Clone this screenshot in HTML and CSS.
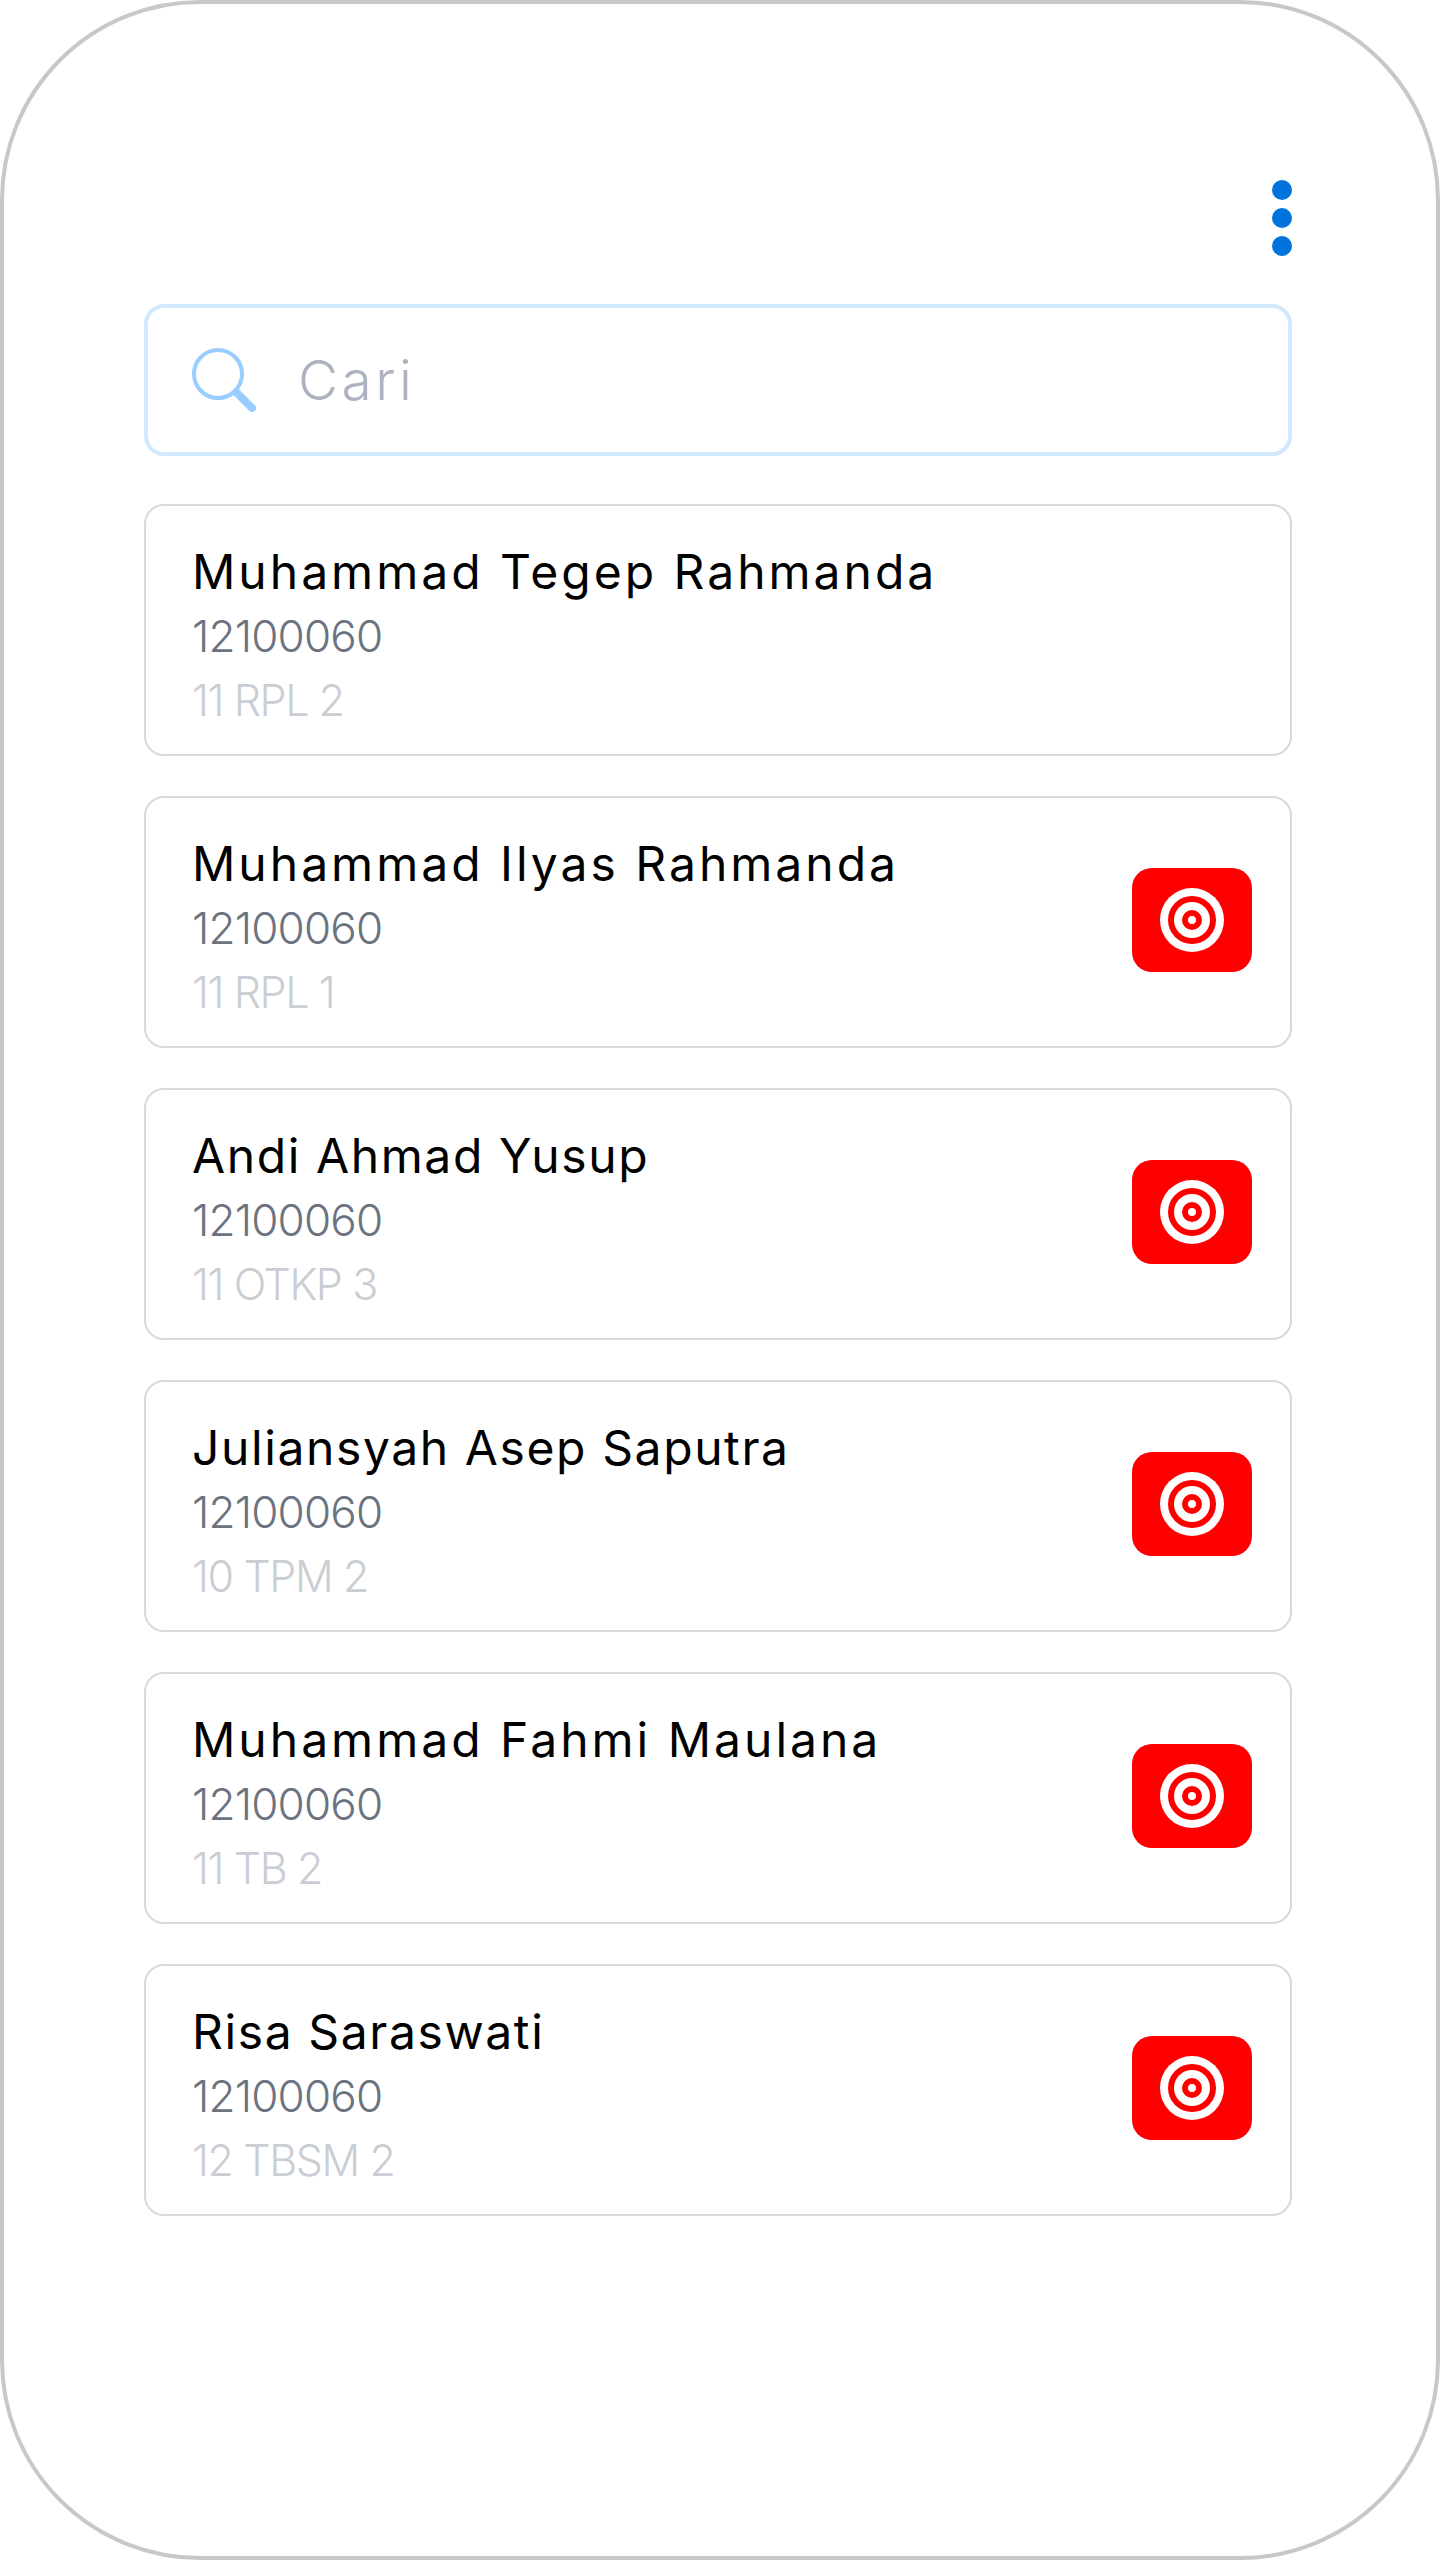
FILE: index.html
```html
<!DOCTYPE html>
<html lang="id">

<head>
    <meta charset="UTF-8">
    <meta name="viewport" content="width=device-width, initial-scale=1.0">
    <title>Cari Siswa</title>
    <link rel="stylesheet" href="styles.css">
</head>

<body>
    <div class="frame">
        <div class="top-bar">
            <div class="menu-dots">
                <span></span>
                <span></span>
                <span></span>
            </div>
        </div>

        <div class="search">
            <svg class="search-icon" width="64" height="64" viewBox="0 0 64 64">
                <circle cx="26" cy="26" r="24" fill="none" stroke="#99ccff" stroke-width="4"/>
                <path d="M44.5 44.5 L60 60" fill="none" stroke="#99ccff" stroke-width="8" stroke-linecap="round"/>
            </svg>
            <span class="search-text">Cari</span>
        </div>

        <div class="list">
            <div class="card">
                <div class="info">
                    <p class="name wide">Muhammad Tegep Rahmanda</p>
                    <p class="nis">12100060</p>
                    <p class="kelas">11 RPL 2</p>
                </div>
            </div>

            <div class="card">
                <div class="info">
                    <p class="name wide">Muhammad Ilyas Rahmanda</p>
                    <p class="nis">12100060</p>
                    <p class="kelas">11 RPL 1</p>
                </div>
                <div class="badge">
                    <svg width="64" height="64" viewBox="0 0 64 64">
                        <circle cx="32" cy="32" r="32" fill="#fff"/>
                        <circle cx="32" cy="32" r="24" fill="#f00"/>
                        <circle cx="32" cy="32" r="18" fill="#fff"/>
                        <circle cx="32" cy="32" r="10" fill="#f00"/>
                        <circle cx="32" cy="32" r="4" fill="#fff"/>
                    </svg>
                </div>
            </div>

            <div class="card">
                <div class="info">
                    <p class="name">Andi Ahmad Yusup</p>
                    <p class="nis">12100060</p>
                    <p class="kelas">11 OTKP 3</p>
                </div>
                <div class="badge">
                    <svg width="64" height="64" viewBox="0 0 64 64">
                        <circle cx="32" cy="32" r="32" fill="#fff"/>
                        <circle cx="32" cy="32" r="24" fill="#f00"/>
                        <circle cx="32" cy="32" r="18" fill="#fff"/>
                        <circle cx="32" cy="32" r="10" fill="#f00"/>
                        <circle cx="32" cy="32" r="4" fill="#fff"/>
                    </svg>
                </div>
            </div>

            <div class="card">
                <div class="info">
                    <p class="name">Juliansyah Asep Saputra</p>
                    <p class="nis">12100060</p>
                    <p class="kelas">10 TPM 2</p>
                </div>
                <div class="badge">
                    <svg width="64" height="64" viewBox="0 0 64 64">
                        <circle cx="32" cy="32" r="32" fill="#fff"/>
                        <circle cx="32" cy="32" r="24" fill="#f00"/>
                        <circle cx="32" cy="32" r="18" fill="#fff"/>
                        <circle cx="32" cy="32" r="10" fill="#f00"/>
                        <circle cx="32" cy="32" r="4" fill="#fff"/>
                    </svg>
                </div>
            </div>

            <div class="card">
                <div class="info">
                    <p class="name wide">Muhammad Fahmi Maulana</p>
                    <p class="nis">12100060</p>
                    <p class="kelas">11 TB 2</p>
                </div>
                <div class="badge">
                    <svg width="64" height="64" viewBox="0 0 64 64">
                        <circle cx="32" cy="32" r="32" fill="#fff"/>
                        <circle cx="32" cy="32" r="24" fill="#f00"/>
                        <circle cx="32" cy="32" r="18" fill="#fff"/>
                        <circle cx="32" cy="32" r="10" fill="#f00"/>
                        <circle cx="32" cy="32" r="4" fill="#fff"/>
                    </svg>
                </div>
            </div>

            <div class="card">
                <div class="info">
                    <p class="name">Risa Saraswati</p>
                    <p class="nis">12100060</p>
                    <p class="kelas">12 TBSM 2</p>
                </div>
                <div class="badge">
                    <svg width="64" height="64" viewBox="0 0 64 64">
                        <circle cx="32" cy="32" r="32" fill="#fff"/>
                        <circle cx="32" cy="32" r="24" fill="#f00"/>
                        <circle cx="32" cy="32" r="18" fill="#fff"/>
                        <circle cx="32" cy="32" r="10" fill="#f00"/>
                        <circle cx="32" cy="32" r="4" fill="#fff"/>
                    </svg>
                </div>
            </div>
        </div>
    </div>
</body>

</html>
```

FILE: styles.css
```css
* {
    box-sizing: border-box;
}

body {
    margin: 0;
    background-color: #fff;
    font-family: "Inter", "Liberation Sans", sans-serif;
}

p {
    margin: 0;
}

.frame {
    width: 1440px;
    height: 2560px;
    padding: 176px 144px 0 140px;
    border: 4px solid #c8c8c8;
    border-radius: 200px;
}

.top-bar {
    display: flex;
    justify-content: flex-end;
    height: 124px;
}

.menu-dots {
    display: flex;
    flex-direction: column;
    gap: 8px;
}

.menu-dots span {
    width: 20px;
    height: 20px;
    border-radius: 50%;
    background-color: #0073dd;
}

.search {
    display: flex;
    align-items: center;
    gap: 42px;
    height: 152px;
    padding-left: 44px;
    border: 4px solid #d1e9ff;
    border-radius: 20px;
}

.search-text {
    font-size: 55px;
    font-weight: 300;
    letter-spacing: 3.5px;
    color: #adb2c0;
}

.list {
    display: flex;
    flex-direction: column;
    gap: 40px;
    margin-top: 48px;
}

.card {
    display: flex;
    align-items: center;
    justify-content: space-between;
    height: 252px;
    padding: 0 38px 0 46px;
    border: 2px solid #d9d9d9;
    border-radius: 20px;
}

.info {
    display: flex;
    flex-direction: column;
    padding-top: 12px;
}

.name {
    font-size: 48px;
    line-height: 64px;
    letter-spacing: 1.6px;
    color: #000;
}

.name.wide {
    letter-spacing: 3px;
}

.nis {
    font-size: 44px;
    line-height: 64px;
    font-weight: 300;
    letter-spacing: -0.8px;
    color: #6b7280;
}

.kelas {
    font-size: 43px;
    line-height: 64px;
    font-weight: 300;
    letter-spacing: -1.4px;
    color: #c9cdd4;
}

.badge {
    display: flex;
    align-items: center;
    justify-content: center;
    width: 120px;
    height: 104px;
    margin-bottom: 4px;
    border-radius: 20px;
    background-color: #f00;
}
```
